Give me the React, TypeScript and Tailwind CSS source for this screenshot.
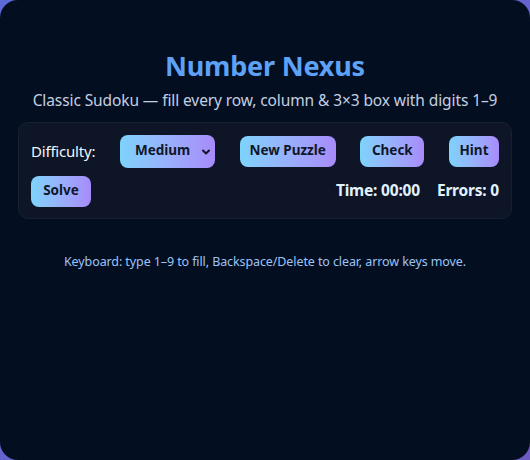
import { useEffect, useState } from "react";

const btn =
  "rounded-lg bg-gradient-to-r from-[#7dd3fc] to-[#a78bfa] text-[#0f172a] font-bold text-[13.5px] leading-none";

function pad(n: number) {
  return n.toString().padStart(2, "0");
}

export default function App() {
  const [difficulty, setDifficulty] = useState("medium");
  const [seconds] = useState(0);
  const [errors] = useState(0);

  useEffect(() => {
    document.body.style.margin = "0";
  }, []);

  return (
    <div className="w-[530px] h-[460px] bg-gradient-to-br from-[#5a6ad8] to-[#6e5cc2] font-['Noto_Sans','Open_Sans',sans-serif]">
      <div className="w-full h-full rounded-[18px] bg-[#040e21] px-[18px] pt-[52px] flex flex-col">
        <h1 className="text-center text-[27px] font-bold text-[#5ea2f7] leading-none tracking-[-0.2px]">
          Number Nexus
        </h1>
        <p className="text-center text-[15.5px] text-[#c3cfe2] mt-[14px] leading-none tracking-[-0.1px]">
          Classic Sudoku — fill every row, column &amp; 3×3 box with digits 1–9
        </p>

        {/* controls */}
        <div className="mt-[13px] rounded-[10px] bg-[#0d1527] border border-[#172033] px-[12px] pt-[12px] pb-[11px] flex flex-col gap-[8px]">
          <div className="flex items-center justify-between">
            <label className="text-[15px] text-[#f1f5f9] leading-none tracking-[-0.2px]">Difficulty:</label>
            <div className="relative">
              <select
                value={difficulty}
                onChange={(e) => setDifficulty(e.target.value)}
                className={`${btn} appearance-none w-[95px] h-[33px] pl-[15px] pr-[24px] outline-none`}
              >
                <option value="easy">Easy</option>
                <option value="medium">Medium</option>
                <option value="hard">Hard</option>
              </select>
              <svg
                className="absolute right-[4px] top-[12px] w-[10px] h-[10px] pointer-events-none"
                viewBox="0 0 10 10"
                fill="none"
                stroke="#0f172a"
                strokeWidth={2}
              >
                <path d="M2 3.5 5 6.5 8 3.5" strokeLinecap="round" strokeLinejoin="round" />
              </svg>
            </div>
            <button className={`${btn} w-[96px] h-[31px]`}>New Puzzle</button>
            <button className={`${btn} w-[64px] h-[31px]`}>Check</button>
            <button className={`${btn} w-[50px] h-[31px]`}>Hint</button>
          </div>
          <div className="flex items-center justify-between">
            <button className={`${btn} w-[60px] h-[31px]`}>Solve</button>
            <div className="flex items-center gap-[17px] text-[15.5px] font-bold text-[#e0f2fe] leading-none tracking-[-0.2px]">
              <span>
                Time: {pad(Math.floor(seconds / 60))}:{pad(seconds % 60)}
              </span>
              <span>Errors: {errors}</span>
            </div>
          </div>
        </div>

        <p className="text-center text-[12.5px] text-[#9cc3f5] mt-[37px] leading-none tracking-[-0.1px]">
          Keyboard: type 1–9 to fill, Backspace/Delete to clear, arrow keys move.
        </p>
      </div>
    </div>
  );
}
